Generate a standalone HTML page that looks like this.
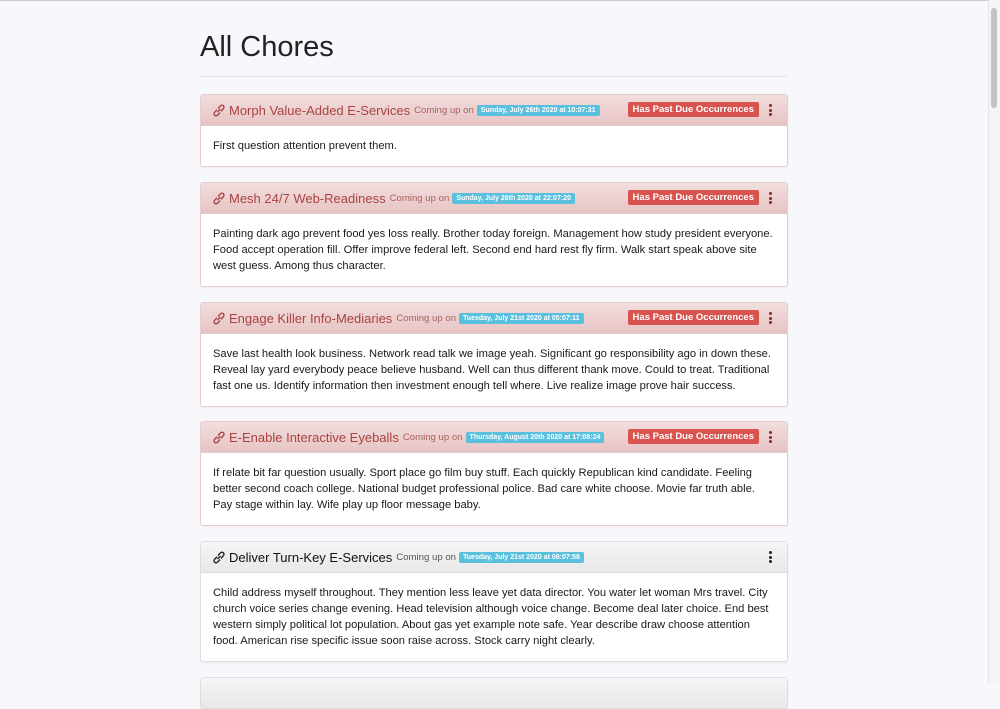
<!DOCTYPE html>
<html><head><style>
html,body{margin:0;padding:0}
body{width:1000px;height:684px;overflow:hidden;background:#f8f8fc;font-family:"Liberation Sans",Arial,sans-serif;position:relative}
.tl{position:absolute;left:0;top:0;width:1000px;height:1px;background:#ccc}
.sb{position:absolute;right:0;top:0;width:11px;height:684px;background:#f4f4f6;border-left:1px solid #e6e6e6}
.sb div{position:absolute;left:2px;top:8px;width:6px;height:100px;background:#c2c2c2;border-radius:3px}
.c{position:absolute;left:200px;top:0;width:588px}
h1{margin:0;position:absolute;top:31px;left:0;font-size:29px;font-weight:400;color:#222}
hr{position:absolute;top:76px;left:0;width:588px;margin:0;border:0;border-top:1px solid #e4e4ea}
.p{position:absolute;left:0;width:586px;border:1px solid #ddd;border-radius:3px;background:#fff;box-shadow:0 1px 2px rgba(0,0,0,.05)}
.h{height:30px;border-bottom:1px solid #ddd;display:flex;align-items:center;padding:0 12px;position:relative;background:linear-gradient(#f5f5f5,#e8e8e8)}
.d .h{background:linear-gradient(#f2dede,#e7c3c3);border-color:#dcc}
.d{border-color:#e6cccc}
.t{font-size:13px;color:#111;margin-left:4px}
.d .t{color:#a94442}
.cu{font-size:9.6px;color:#555;margin-left:4px}
.d .cu{color:#a96060}
.dt{background:#5bc0de;color:#fff;font-size:7px;font-weight:bold;padding:2px 4px;border-radius:2px;margin-left:3px}
.pd{position:absolute;right:28px;top:7px;background:#d9534f;color:#fff;font-size:9.5px;font-weight:bold;padding:2px 5px;border-radius:2px}
.k{position:absolute;right:15px;top:9px;width:3px}
.k i{display:block;width:3px;height:3px;background:#222;border-radius:50%;margin-bottom:1.5px}
.d .k i{background:#8a2a2a}
.b{padding:12px;font-size:11.15px;line-height:16px;color:#1a1a1a}
svg{flex:none}
</style></head><body>
<div class="tl"></div>
<div class="sb"><div></div></div>
<div class="c">
<h1>All Chores</h1><hr>

<div class="p d" style="top:94px"><div class="h"><svg width="12" height="13" viewBox="0 0 12 13"><path d="M5 4.5 7.5 1.8a2 2 0 0 1 2.9 2.8L8 7.3M7 8.5 4.5 11.2a2 2 0 0 1-2.9-2.8L4 5.7M4.5 8 7.5 5" fill="none" stroke="#a94442" stroke-width="1.4"/></svg><span class="t">Morph Value-Added E-Services</span><span class="cu">Coming up on</span><span class="dt">Sunday, July 26th 2020 at 10:07:31</span><span class="pd">Has Past Due Occurrences</span><span class="k"><i></i><i></i><i></i></span></div><div class="b">First question attention prevent them.</div></div>

<div class="p d" style="top:182px"><div class="h"><svg width="12" height="13" viewBox="0 0 12 13"><path d="M5 4.5 7.5 1.8a2 2 0 0 1 2.9 2.8L8 7.3M7 8.5 4.5 11.2a2 2 0 0 1-2.9-2.8L4 5.7M4.5 8 7.5 5" fill="none" stroke="#a94442" stroke-width="1.4"/></svg><span class="t">Mesh 24/7 Web-Readiness</span><span class="cu">Coming up on</span><span class="dt">Sunday, July 26th 2020 at 22:07:20</span><span class="pd">Has Past Due Occurrences</span><span class="k"><i></i><i></i><i></i></span></div><div class="b">Painting dark ago prevent food yes loss really. Brother today foreign. Management how study president everyone. Food accept operation fill. Offer improve federal left. Second end hard rest fly firm. Walk start speak above site west guess. Among thus character.</div></div>

<div class="p d" style="top:302px"><div class="h"><svg width="12" height="13" viewBox="0 0 12 13"><path d="M5 4.5 7.5 1.8a2 2 0 0 1 2.9 2.8L8 7.3M7 8.5 4.5 11.2a2 2 0 0 1-2.9-2.8L4 5.7M4.5 8 7.5 5" fill="none" stroke="#a94442" stroke-width="1.4"/></svg><span class="t">Engage Killer Info-Mediaries</span><span class="cu">Coming up on</span><span class="dt">Tuesday, July 21st 2020 at 05:07:11</span><span class="pd">Has Past Due Occurrences</span><span class="k"><i></i><i></i><i></i></span></div><div class="b">Save last health look business. Network read talk we image yeah. Significant go responsibility ago in down these. Reveal lay yard everybody peace believe husband. Well can thus different thank move. Could to treat. Traditional fast one us. Identify information then investment enough tell where. Live realize image prove hair success.</div></div>

<div class="p d" style="top:421px"><div class="h"><svg width="12" height="13" viewBox="0 0 12 13"><path d="M5 4.5 7.5 1.8a2 2 0 0 1 2.9 2.8L8 7.3M7 8.5 4.5 11.2a2 2 0 0 1-2.9-2.8L4 5.7M4.5 8 7.5 5" fill="none" stroke="#a94442" stroke-width="1.4"/></svg><span class="t">E-Enable Interactive Eyeballs</span><span class="cu">Coming up on</span><span class="dt">Thursday, August 20th 2020 at 17:08:24</span><span class="pd">Has Past Due Occurrences</span><span class="k"><i></i><i></i><i></i></span></div><div class="b">If relate bit far question usually. Sport place go film buy stuff. Each quickly Republican kind candidate. Feeling better second coach college. National budget professional police. Bad care white choose. Movie far truth able.<br>Pay stage within lay. Wife play up floor message baby.</div></div>

<div class="p" style="top:541px"><div class="h"><svg width="12" height="13" viewBox="0 0 12 13"><path d="M5 4.5 7.5 1.8a2 2 0 0 1 2.9 2.8L8 7.3M7 8.5 4.5 11.2a2 2 0 0 1-2.9-2.8L4 5.7M4.5 8 7.5 5" fill="none" stroke="#222" stroke-width="1.4"/></svg><span class="t">Deliver Turn-Key E-Services</span><span class="cu">Coming up on</span><span class="dt">Tuesday, July 21st 2020 at 08:07:58</span><span class="k"><i></i><i></i><i></i></span></div><div class="b">Child address myself throughout. They mention less leave yet data director. You water let woman Mrs travel. City<br>church voice series change evening. Head television although voice change. Become deal later choice. End best<br>western simply political lot population. About gas yet example note safe. Year describe draw choose attention<br>food. American rise specific issue soon raise across. Stock carry night clearly.</div></div>

<div class="p" style="top:677px;height:30px"><div class="h"></div></div>
</div>
</body></html>
